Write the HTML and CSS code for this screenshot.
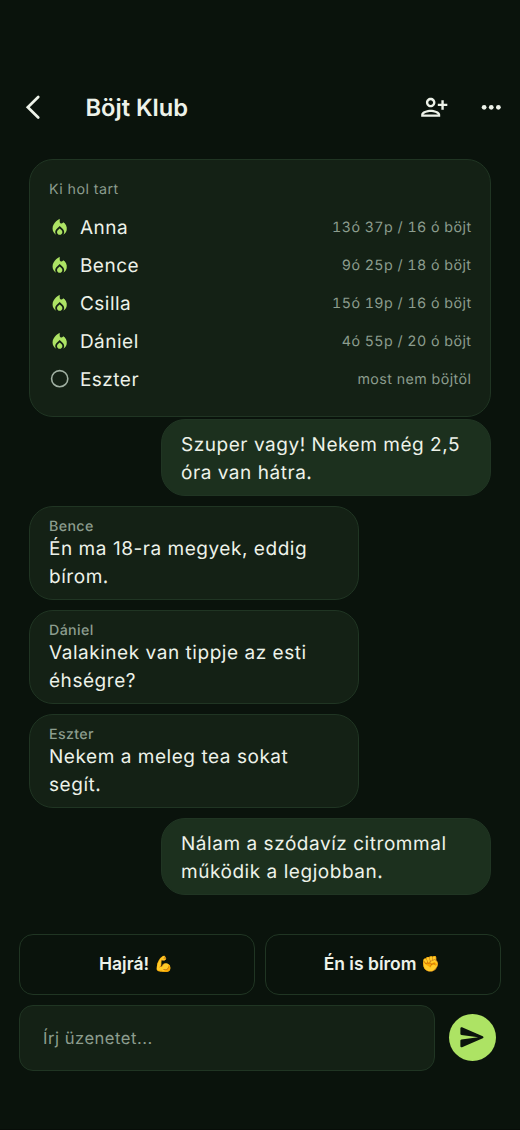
FILE: index.html
```html
<!DOCTYPE html>
<html lang="hu">
<head>
<meta charset="utf-8">
<title>Böjt Klub</title>
<link rel="stylesheet" href="styles.css">
</head>
<body>
<svg class="defs" width="0" height="0">
  <symbol id="fire" viewBox="0 0 24 24"><path d="M12 12.9l-2.13 2.09c-.56.56-.87 1.29-.87 2.07C9 18.68 10.35 20 12 20s3-1.32 3-2.94c0-.78-.31-1.52-.87-2.07L12 12.9zM16 6l-.44.55C14.38 8.02 12 7.19 12 5.3V2S4 6 4 13c0 2.92 1.56 5.47 3.89 6.86-.56-.79-.89-1.76-.89-2.8 0-1.32.52-2.56 1.47-3.5L12 10.1l3.53 3.47c.95.93 1.47 2.17 1.47 3.5 0 1.02-.31 1.96-.85 2.75 1.89-1.15 3.29-3.06 3.71-5.3.66-3.55-1.07-6.9-3.86-8.52z"/></symbol>
</svg>
<div class="screen">
  <header class="bar">
    <svg class="icon back" viewBox="0 0 24 24"><path d="M16.2 3.3 7.4 12l8.8 8.7" fill="none" stroke="currentColor" stroke-width="2.3" stroke-linecap="round"/></svg>
    <h1 class="title">Böjt Klub</h1>
    <svg class="icon" viewBox="0 0 24 24"><path d="M13 8c0-2.21-1.79-4-4-4S5 5.79 5 8s1.79 4 4 4 4-1.79 4-4zm-2 0c0 1.1-.9 2-2 2s-2-.9-2-2 .9-2 2-2 2 .9 2 2zM1 18v2h16v-2c0-2.66-5.33-4-8-4s-8 1.34-8 4zm2 0c.2-.71 3.3-2 6-2 2.69 0 5.78 1.28 6 2H3zM20 9V6h-2v3h-3v2h3v3h2v-3h3V9h-3z"/></svg>
    <svg class="icon more" viewBox="0 0 24 24"><circle cx="6" cy="12" r="2"/><circle cx="12" cy="12" r="2"/><circle cx="18" cy="12" r="2"/></svg>
  </header>
  <main class="chat">
    <section class="card">
      <div class="caption">Ki hol tart</div>
      <div class="row"><svg class="mark"><use href="#fire"/></svg><span class="name">Anna</span><span class="time">13ó 37p / 16 ó böjt</span></div>
      <div class="row"><svg class="mark"><use href="#fire"/></svg><span class="name">Bence</span><span class="time">9ó 25p / 18 ó böjt</span></div>
      <div class="row"><svg class="mark"><use href="#fire"/></svg><span class="name">Csilla</span><span class="time">15ó 19p / 16 ó böjt</span></div>
      <div class="row"><svg class="mark"><use href="#fire"/></svg><span class="name">Dániel</span><span class="time">4ó 55p / 20 ó böjt</span></div>
      <div class="row"><svg class="mark idle" viewBox="0 0 24 24"><circle cx="12" cy="12" r="9.1"/></svg><span class="name">Eszter</span><span class="time">most nem böjtöl</span></div>
    </section>
    <div class="bubble own">Szuper vagy! Nekem még 2,5 óra van hátra.</div>
    <div class="bubble"><div class="author">Bence</div>Én ma 18-ra megyek, eddig bírom.</div>
    <div class="bubble"><div class="author">Dániel</div>Valakinek van tippje az esti éhségre?</div>
    <div class="bubble"><div class="author">Eszter</div>Nekem a meleg tea sokat segít.</div>
    <div class="bubble own">Nálam a szódavíz citrommal működik a legjobban.</div>
  </main>
  <footer class="composer">
    <div class="quick">
      <button class="chip">Hajrá! <span class="emoji">💪</span></button>
      <button class="chip">Én is bírom <span class="emoji">✊</span></button>
    </div>
    <div class="entry">
      <div class="field">Írj üzenetet...</div>
      <button class="send"><svg class="icon" viewBox="0 0 24 24"><path d="M3.4 20.4l17.45-7.48c.81-.35.81-1.49 0-1.84L3.4 3.6c-.66-.29-1.39.2-1.39.91L2 9.12c0 .5.37.93.87.99L17 12 2.87 13.88c-.5.07-.87.5-.87 1l.01 4.61c0 .71.73 1.2 1.39.91z"/></svg></button>
    </div>
  </footer>
</div>
</body>
</html>
```
FILE: styles.css
```css
* { box-sizing: border-box; }
body { margin: 0; background: #0a130c; color: #edf2e9; font-family: Inter, "Noto Sans", sans-serif; text-rendering: geometricPrecision; }
.defs { display: block; }
.screen { width: 520px; height: 1130px; overflow: hidden; display: flex; flex-direction: column; border-bottom: 1px solid #070d08; }
.icon { width: 28.5px; height: 28.5px; fill: currentColor; flex: none; }
.bar { height: 158.5px; padding: 55px 14.6px 0 19px; display: flex; align-items: center; flex: none; }
.title { margin: 0; padding: 2px 0 0 37.9px; flex: 1; font-size: 23.7px; font-weight: 600; line-height: 30px; }
.more { margin-left: 28px; }
.chat { padding: 0 29px; display: flex; flex-direction: column; gap: 9.6px; }
.card { height: 258.5px; padding: 18.2px 19px 0; margin-bottom: -7.6px; border: 1.2px solid #203523; border-radius: 24px; background: #142115; }
.caption { height: 31.1px; padding-top: 3px; font-size: 14.25px; line-height: 17px; letter-spacing: .45px; color: #8c9d8e; }
.row { height: 37.85px; display: flex; align-items: center; }
.mark { width: 21.4px; height: 21.4px; margin: 0 9.8px 0 -.3px; fill: #ade364; flex: none; }
.idle { fill: none; stroke: #a0b0a2; stroke-width: 1.8; }
.name { flex: 1; font-size: 19px; letter-spacing: .5px; }
.time { margin-right: -.5px; font-size: 14.25px; letter-spacing: .45px; font-variant-numeric: tabular-nums; color: #8c9d8e; }
.bubble { width: 330px; height: 94.4px; padding: 10.8px 19px 0; border: 1.2px solid #203523; border-radius: 24px; background: #142115; font-size: 19px; line-height: 28.4px; letter-spacing: .54px; }
.own { height: 77.2px; align-self: flex-end; background: #1c301e; }
.author { font-size: 14.25px; line-height: 17px; font-weight: 500; letter-spacing: .35px; color: #8c9d8e; }
.composer { padding: 39px 19px 0; display: flex; flex-direction: column; gap: 9.6px; }
.quick { display: flex; gap: 10px; }
.chip { flex: 1; height: 61px; padding: 0 2.5px 2px 0; border: 1.4px solid #203523; border-radius: 14px; background: none; color: inherit; font: 600 17.5px Inter, "Noto Sans", sans-serif; }
.emoji { font-size: 15.2px; vertical-align: 1px; }
.entry { display: flex; align-items: center; }
.field { width: 416px; height: 66px; padding: 3px 23px 0; display: flex; align-items: center; border: 1.4px solid #203523; border-radius: 14px; background: #142115; color: #8c9d8e; font-size: 16.6px; letter-spacing: .5px; }
.send { width: 47.5px; height: 47.5px; margin-left: 13.5px; padding: 0; display: flex; align-items: center; justify-content: center; border: 0; border-radius: 50%; background: #ade364; color: #0a130c; }
```
